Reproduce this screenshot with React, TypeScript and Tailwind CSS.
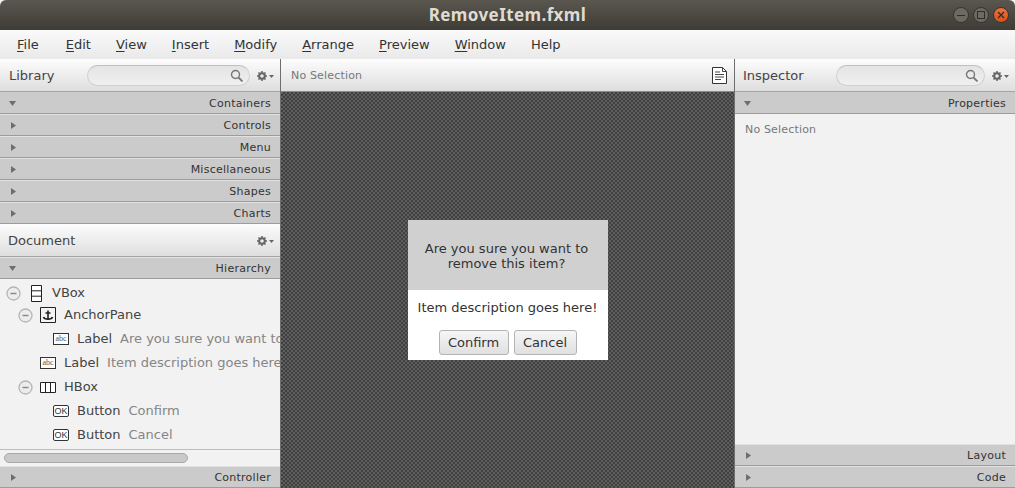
import React from 'react';

const uiFont = "font-['DejaVu_Sans',sans-serif]";

function Gear() {
  return (
    <svg width="17" height="10" viewBox="0 0 17 10" className="shrink-0">
      <g fill="none" stroke="#666" strokeWidth="2">
        <circle cx="5" cy="5" r="2.8" />
        <path d="M5 0v2M5 8v2M0 5h2M8 5h2M1.5 1.5l1.4 1.4M7.1 7.1l1.4 1.4M1.5 8.5l1.4-1.4M7.1 2.9l1.4-1.4" strokeWidth="1.5" />
      </g>
      <path d="M12 4h5l-2.5 3z" fill="#666" />
    </svg>
  );
}

function SearchBox() {
  return (
    <div className="flex-1 h-[21px] rounded-full border border-[#d0d0d0] border-t-[#c0c0c0] bg-gradient-to-b from-[#e4e4e4] to-[#f0f0f0] flex items-center justify-end pr-[6px]">
      <svg width="13" height="13" viewBox="0 0 13 13">
        <circle cx="5.5" cy="5.5" r="4" fill="none" stroke="#777" strokeWidth="1.4" />
        <path d="M8.5 8.5l4 4" stroke="#777" strokeWidth="1.8" />
      </svg>
    </div>
  );
}

function SectionHead({ title, open, flush }: { title: string; open?: boolean; flush?: boolean }) {
  return (
    <div className={`h-[22px] shrink-0 flex items-center justify-between pl-[9px] pr-[9px] bg-[#cbcbcb] border-t border-b border-b-[#9c9c9c] ${flush ? 'border-t-[#cbcbcb]' : 'border-t-[#e2e2e2]'}`}>
      {open ? (
        <svg width="7" height="5" viewBox="0 0 7 5"><path d="M0 0h7L3.5 5z" fill="#6e6e6e" /></svg>
      ) : (
        <svg width="5" height="7" viewBox="0 0 5 7" className="ml-[2px]"><path d="M0 0l5 3.5L0 7z" fill="#6e6e6e" /></svg>
      )}
      <span className="mt-[2px] text-[11px] tracking-[0.25px] text-[#333]">{title}</span>
    </div>
  );
}

function PanelHead({ children }: { children: React.ReactNode }) {
  return (
    <div className="h-[33px] shrink-0 flex items-center pt-px bg-gradient-to-b from-[#fdfdfd] to-[#dedede] border-b border-b-[#a4a4a4]">
      {children}
    </div>
  );
}

function Collapse() {
  return (
    <svg width="15" height="15" viewBox="0 0 15 15" className="shrink-0">
      <circle cx="7.5" cy="7.5" r="6.5" fill="#ececec" stroke="#b5b5b5" strokeWidth="1.3" />
      <path d="M4.5 7.5h6" stroke="#888" strokeWidth="1.4" />
    </svg>
  );
}

function VBoxIcon() {
  return (
    <svg width="11" height="17" viewBox="0 0 11 17">
      <path d="M.5.5h10v16H.5zM.5 5.8h10M.5 11.2h10" fill="#fff" stroke="#222" />
    </svg>
  );
}

function HBoxIcon() {
  return (
    <svg width="16" height="11" viewBox="0 0 16 11">
      <path d="M.5.5h15v10H.5zM5.5.5v10M10.5.5v10" fill="#fff" stroke="#222" />
    </svg>
  );
}

function AnchorIcon() {
  return (
    <svg width="16" height="16" viewBox="0 0 16 16">
      <path d="M.5.5h15v15H.5z" fill="#f4f4f4" stroke="#222" />
      <path d="M8 3.5v8.5M5.5 6h5M3.5 10c.5 1.8 2.5 2.2 4.5 2.2s4-.4 4.5-2.2" fill="none" stroke="#222" strokeWidth="1.6" />
    </svg>
  );
}

function LabelIcon() {
  return (
    <div className="w-[16px] h-[12px] border border-[#333] bg-white flex items-center justify-center">
      <span className="font-['Liberation_Serif',serif] text-[8px] leading-none text-[#555]">abc</span>
    </div>
  );
}

function ButtonIcon() {
  return (
    <div className="w-[16px] h-[12px] rounded-[2px] border border-[#333] bg-white flex items-center justify-center">
      <span className="font-['Liberation_Sans',sans-serif] text-[9px] leading-none text-[#333]">OK</span>
    </div>
  );
}

type TreeRow = {
  indent: string;
  height: string;
  toggle?: boolean;
  icon: React.ReactNode;
  name: string;
  value?: string;
};

const rows: TreeRow[] = [
  { indent: 'pl-[6px]', height: 'h-[22px]', toggle: true, icon: <VBoxIcon />, name: 'VBox' },
  { indent: 'pl-[18px]', height: 'h-[22px]', toggle: true, icon: <AnchorIcon />, name: 'AnchorPane' },
  { indent: 'pl-[53px] mt-px', height: 'h-[24px]', icon: <LabelIcon />, name: 'Label', value: 'Are you sure you want to remove this item?' },
  { indent: 'pl-[40px]', height: 'h-[24px]', icon: <LabelIcon />, name: 'Label', value: 'Item description goes here!' },
  { indent: 'pl-[18px]', height: 'h-[24px]', toggle: true, icon: <HBoxIcon />, name: 'HBox' },
  { indent: 'pl-[53px]', height: 'h-[24px]', icon: <ButtonIcon />, name: 'Button', value: 'Confirm' },
  { indent: 'pl-[53px]', height: 'h-[24px]', icon: <ButtonIcon />, name: 'Button', value: 'Cancel' },
];

export default function App() {
  const menu = ['File', 'Edit', 'View', 'Insert', 'Modify', 'Arrange', 'Preview', 'Window', 'Help'];

  return (
    <div className={`w-[1015px] h-[488px] overflow-hidden flex flex-col bg-[#f2f2f2] ${uiFont}`}>
      {/* Window title bar */}
      <div className="h-[30px] shrink-0 rounded-t-[6px] bg-gradient-to-b from-[#5a574f] to-[#3e3c36] flex items-center justify-center relative">
        <span className="font-['Noto_Sans',sans-serif] font-bold text-[17px] tracking-[0.4px] text-[#dfdbd2]">RemoveItem.fxml</span>
        <div className="absolute right-[6px] top-[7px] flex items-center gap-[4px]">
          <div className="w-[16px] h-[16px] rounded-full bg-[#6c6a63] border border-[#36342f] flex items-center justify-center">
            <div className="w-[8px] h-[1px] bg-[#2e2d29]" />
          </div>
          <div className="w-[16px] h-[16px] rounded-full bg-[#6c6a63] border border-[#36342f] flex items-center justify-center">
            <div className="w-[8px] h-[8px] border border-[#2e2d29]" />
          </div>
          <div className="w-[16px] h-[16px] rounded-full bg-gradient-to-b from-[#f0703a] to-[#d9501e] border border-[#36342f] flex items-center justify-center">
            <svg width="8" height="8" viewBox="0 0 8 8"><path d="M1 1l6 6M7 1L1 7" stroke="#3a2a20" strokeWidth="1.4" /></svg>
          </div>
        </div>
      </div>

      {/* Menu bar */}
      <div className="h-[29px] shrink-0 flex items-center gap-[25px] pl-[17px] bg-gradient-to-b from-[#fafafa] to-[#e9e9e9] text-[13px] text-[#333]">
        {menu.map((m) =>
          m === 'Help' ? (
            <span key={m}>{m}</span>
          ) : (
            <span key={m} className={m === 'File' ? 'mr-[2px]' : ''}>
              <span className="underline underline-offset-2">{m[0]}</span>
              {m.slice(1)}
            </span>
          ),
        )}
      </div>

      <div className="flex-1 flex min-h-0">
        {/* Left column */}
        <div className="w-[280px] shrink-0 flex flex-col">
          <PanelHead>
            <span className="w-[87px] pl-[9px] text-[13px] text-[#444]">Library</span>
            <SearchBox />
            <div className="w-[30px] flex justify-center"><Gear /></div>
          </PanelHead>
          <SectionHead title="Containers" open flush />
          <SectionHead title="Controls" />
          <SectionHead title="Menu" />
          <SectionHead title="Miscellaneous" />
          <SectionHead title="Shapes" />
          <SectionHead title="Charts" />
          <PanelHead>
            <span className="flex-1 pl-[8px] text-[13px] text-[#444]">Document</span>
            <div className="w-[30px] flex justify-center"><Gear /></div>
          </PanelHead>
          <SectionHead title="Hierarchy" open />
          <div className="flex-1 min-h-0 pt-[3px] overflow-hidden text-[13px]">
            {rows.map((r, i) => (
              <div key={i} className={`flex items-center whitespace-nowrap ${r.height} ${r.indent}`}>
                {r.toggle && <Collapse />}
                <div className={r.toggle ? 'ml-[7px] w-[16px] flex items-center justify-center' : 'w-[16px] flex items-center justify-center'}>{r.icon}</div>
                <span className="ml-[8px] text-[#444]">{r.name}</span>
                {r.value && <span className="ml-[8px] text-[#858585]">{r.value}</span>}
              </div>
            ))}
          </div>
          <div className="h-[17px] shrink-0 border-t border-t-[#bdbdbd] flex items-center pl-[4px]">
            <div className="w-[184px] h-[10px] rounded-full bg-[#c9c9c9] border border-[#a9a9a9]" />
          </div>
          <SectionHead title="Controller" />
        </div>

        {/* Content panel */}
        <div className="w-[455px] shrink-0 flex flex-col border-l border-r border-[#6e6e6e]">
          <div className="h-[33px] shrink-0 flex items-center justify-between pt-px pl-[10px] pr-[7px] bg-gradient-to-b from-[#fdfdfd] to-[#dedede] border-b border-b-[#8a8a8a]">
            <span className="mt-[2px] text-[11px] tracking-[0.17px] text-[#777]">No Selection</span>
            <svg width="15" height="17" viewBox="0 0 15 17">
              <path d="M.5.5h10l4 4v12H.5z" fill="#fff" stroke="#333" />
              <path d="M10.5.5v4h4M3 5h5M3 7.5h9M3 10h9M3 12.5h6" fill="none" stroke="#444" />
            </svg>
          </div>
          <div className="flex-1 flex items-center justify-center bg-[conic-gradient(#3f3f3f_25%,#5f5f5f_0_50%,#3f3f3f_0_75%,#5f5f5f_0)] bg-[length:4px_4px]">
            <div className="w-[200px] h-[140px] flex flex-col bg-white text-[13px] text-[#333]">
              <div className="h-[70px] shrink-0 bg-[#d0d0d0] flex items-center justify-center text-center leading-[15px] pt-[2px] pr-[2px]">
                Are you sure you want to<br />remove this item?
              </div>
              <div className="flex-1 flex flex-col items-center">
                <div className="h-[35px] flex items-center">Item description goes here!</div>
                <div className="flex gap-[5px] mt-[5px]">
                  <div className="w-[70px] h-[25px] rounded-[3px] border border-[#b4b4b4] bg-gradient-to-b from-[#f6f6f6] to-[#e0e0e0] flex items-center justify-center">Confirm</div>
                  <div className="w-[63px] h-[25px] rounded-[3px] border border-[#b4b4b4] bg-gradient-to-b from-[#f6f6f6] to-[#e0e0e0] flex items-center justify-center">Cancel</div>
                </div>
              </div>
            </div>
          </div>
        </div>

        {/* Right column */}
        <div className="flex-1 flex flex-col min-w-0">
          <PanelHead>
            <span className="w-[101px] pl-[8px] text-[13px] text-[#444]">Inspector</span>
            <SearchBox />
            <div className="w-[30px] flex justify-center"><Gear /></div>
          </PanelHead>
          <SectionHead title="Properties" open flush />
          <div className="flex-1 pl-[10px] pt-[8px] text-[11px] tracking-[0.17px] text-[#777]">No Selection</div>
          <SectionHead title="Layout" />
          <SectionHead title="Code" />
        </div>
      </div>
    </div>
  );
}
